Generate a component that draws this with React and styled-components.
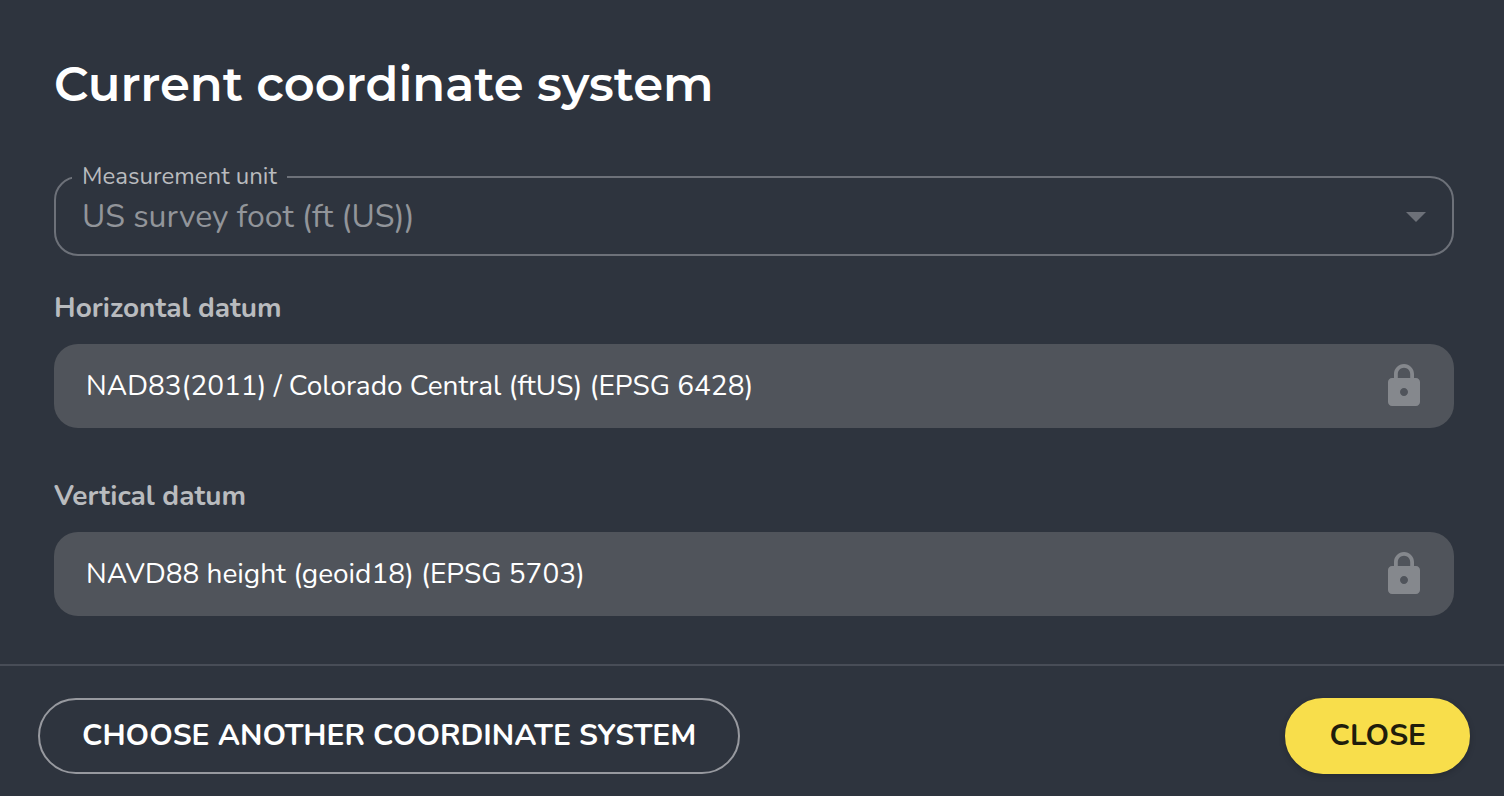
import React from 'react';
import styled, { createGlobalStyle } from 'styled-components';
import { MdArrowDropDown, MdLock } from 'react-icons/md';

const COLORS = {
  background: '#2e343e',
  field: '#50545b',
  outline: '#6d7179',
  divider: '#484d57',
  label: '#b9bbbe',
  disabled: '#92959a',
  icon: '#85888d',
  buttonOutline: '#97999f',
  primary: '#f8de4b',
  onPrimary: '#1f1d0c',
  white: '#ffffff',
};

const FONTS = {
  heading: "Montserrat, Inter, sans-serif",
  body: "Nunito, 'Open Sans', sans-serif",
};

const GlobalStyle = createGlobalStyle`
  *, *::before, *::after {
    box-sizing: border-box;
  }

  body {
    margin: 0;
    background: ${COLORS.background};
    font-family: ${FONTS.body};
  }
`;

const Dialog = styled.main`
  display: flex;
  flex-direction: column;
  min-height: 100vh;
  color: ${COLORS.white};
`;

const Content = styled.div`
  flex: 1;
  padding: 54px 50px 48px 54px;
`;

const Title = styled.h1`
  margin: 0 0 50px;
  font-family: ${FONTS.heading};
  font-size: 48px;
  font-weight: 600;
  line-height: 60px;
`;

const Outline = styled.fieldset`
  min-width: 0;
  margin: 0 0 32px;
  padding: 0 12px 12px 16px;
  border: 2px solid ${COLORS.outline};
  border-radius: 24px;
`;

const Legend = styled.legend`
  padding: 0 10px 2px;
  color: ${COLORS.label};
  font-size: 24px;
  line-height: 24px;
`;

const SelectWrapper = styled.div`
  display: grid;
  align-items: center;
  color: ${COLORS.outline};

  > * {
    grid-area: 1 / 1;
  }

  svg {
    justify-self: end;
    pointer-events: none;
  }
`;

const Select = styled.select`
  appearance: none;
  width: 100%;
  height: 52px;
  padding: 0 48px 0 10px;
  border: 0;
  background: transparent;
  color: ${COLORS.disabled};
  font-family: inherit;
  font-size: 32px;
  opacity: 1;
`;

const Datum = styled.div`
  & + & {
    margin-top: 48px;
  }
`;

const DatumLabel = styled.label`
  display: block;
  margin-bottom: 16px;
  color: ${COLORS.label};
  font-size: 28px;
  font-weight: 700;
  line-height: 40px;
`;

const LockedField = styled.div`
  display: flex;
  align-items: center;
  height: 84px;
  padding: 0 26px 0 32px;
  border-radius: 24px;
  background: ${COLORS.field};
  color: ${COLORS.icon};
`;

const LockedInput = styled.input`
  flex: 1;
  min-width: 0;
  padding: 0;
  border: 0;
  outline: 0;
  background: transparent;
  color: ${COLORS.white};
  font-family: inherit;
  font-size: 28px;
  line-height: 40px;
`;

const Actions = styled.footer`
  display: flex;
  flex-wrap: wrap;
  justify-content: space-between;
  gap: 16px;
  padding: 32px 34px 22px 38px;
  border-top: 2px solid ${COLORS.divider};
`;

const Button = styled.button`
  height: 76px;
  padding: 0 42px 2px;
  border: 2px solid ${({ $primary }) => ($primary ? COLORS.primary : COLORS.buttonOutline)};
  border-radius: 38px;
  background: ${({ $primary }) => ($primary ? COLORS.primary : 'transparent')};
  box-shadow: ${({ $primary }) => ($primary ? '0 2px 6px rgba(0, 0, 0, 0.2)' : 'none')};
  color: ${({ $primary }) => ($primary ? COLORS.onPrimary : COLORS.white)};
  font-family: inherit;
  font-size: 30px;
  font-weight: 700;
  text-transform: uppercase;
  cursor: pointer;
`;

const DATUMS = [
  {
    id: 'horizontal-datum',
    label: 'Horizontal datum',
    value: 'NAD83(2011) / Colorado Central (ftUS) (EPSG 6428)',
  },
  {
    id: 'vertical-datum',
    label: 'Vertical datum',
    value: 'NAVD88 height (geoid18) (EPSG 5703)',
  },
];

export default function App() {
  return (
    <>
      <GlobalStyle />
      <Dialog>
        <Content>
          <Title>Current coordinate system</Title>
          <Outline>
            <Legend>
              <label htmlFor="unit">Measurement unit</label>
            </Legend>
            <SelectWrapper>
              <Select id="unit" defaultValue="us-ft" disabled>
                <option value="us-ft">US survey foot (ft (US))</option>
              </Select>
              <MdArrowDropDown size={48} aria-hidden="true" />
            </SelectWrapper>
          </Outline>
          {DATUMS.map(({ id, label, value }) => (
            <Datum key={id}>
              <DatumLabel htmlFor={id}>{label}</DatumLabel>
              <LockedField>
                <LockedInput id={id} type="text" value={value} readOnly />
                <MdLock size={48} aria-hidden="true" />
              </LockedField>
            </Datum>
          ))}
        </Content>
        <Actions>
          <Button type="button">Choose another coordinate system</Button>
          <Button type="button" $primary>
            Close
          </Button>
        </Actions>
      </Dialog>
    </>
  );
}
